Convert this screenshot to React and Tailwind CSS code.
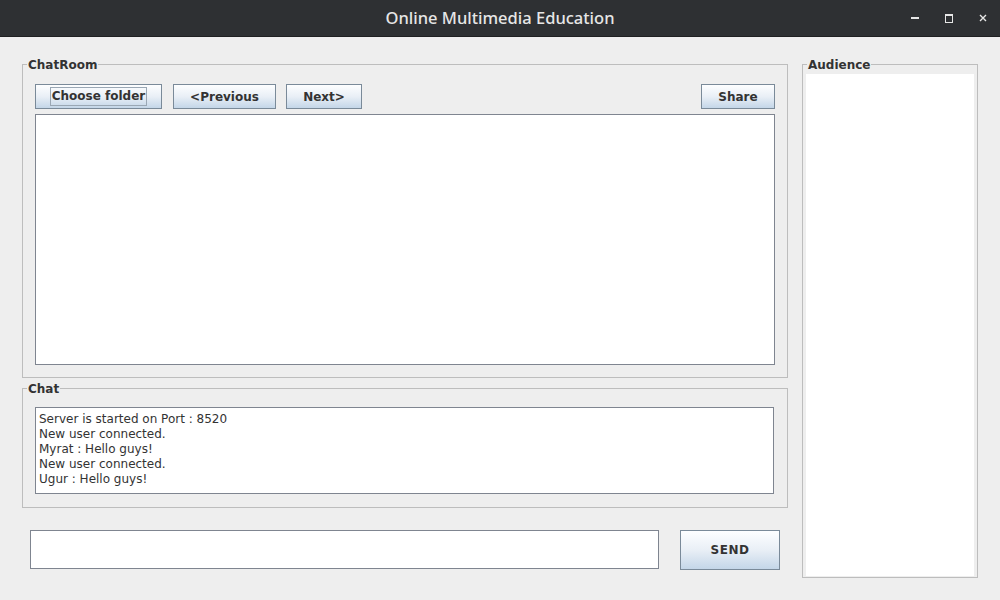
import React from "react";

const font = { fontFamily: '"DejaVu Sans", sans-serif' };

function SwingButton({ children, className = "", focused = false }) {
  return (
    <button
      className={
        "flex items-center justify-center border border-[#7a8a99] bg-gradient-to-b from-[#fdfeff] via-[#e9eff6] to-[#c4d6e8] text-[12px] font-bold text-[#333333] " +
        className
      }
    >
      {focused ? (
        <span className="border border-[#9aa7b4] px-[1px] leading-[17px]">{children}</span>
      ) : (
        children
      )}
    </button>
  );
}

function Group({ title, className = "", children }) {
  return (
    <div className={"relative border border-[#bdbdbd] " + className}>
      <span className="absolute -top-[7px] left-[4px] bg-[#eeeeee] px-[1px] text-[12px] font-bold leading-[15px] text-[#333333]">
        {title}
      </span>
      {children}
    </div>
  );
}

export default function App() {
  const lines = [
    "Server is started on Port : 8520",
    "New user connected.",
    "Myrat : Hello guys!",
    "New user connected.",
    "Ugur : Hello guys!",
  ];

  return (
    <div className="flex h-[600px] w-[1000px] flex-col overflow-hidden bg-[#eeeeee]" style={font}>
      {/* title bar */}
      <div className="relative flex h-[37px] shrink-0 items-center justify-center border-b border-[#1f2022] bg-[#2e3033]">
        <span
          className="text-[16.5px] font-medium text-[#e6e6e6]"
          style={{ fontFamily: '"Noto Sans", sans-serif' }}
        >
          Online Multimedia Education
        </span>
        <div className="absolute right-0 top-0 flex h-[36px] items-center">
          <div className="flex w-[34px] justify-center">
            <div className="h-[2px] w-[8px] bg-[#e6e6e6]" />
          </div>
          <div className="flex w-[34px] justify-center">
            <div className="h-[9px] w-[8px] border-[1.5px] border-t-2 border-[#e6e6e6]" />
          </div>
          <div className="flex w-[34px] justify-center">
            <svg width="8" height="8" viewBox="0 0 8 8">
              <path d="M1 1L7 7M7 1L1 7" stroke="#e6e6e6" strokeWidth="1.4" />
            </svg>
          </div>
        </div>
      </div>

      <div className="flex pt-[27px]">
        {/* left column */}
        <div className="ml-[22px] flex w-[766px] flex-col">
          <Group title="ChatRoom" className="h-[314px] px-[12px] pt-[19px]">
            <div className="flex h-[25px] gap-[10px]">
              <SwingButton className="w-[127px]" focused>
                Choose folder
              </SwingButton>
              <SwingButton className="ml-[1px] w-[103px]">&lt;Previous</SwingButton>
              <SwingButton className="w-[76px]">Next&gt;</SwingButton>
              <SwingButton className="ml-auto w-[74px]">Share</SwingButton>
            </div>
            <div className="mt-[5px] h-[251px] w-[740px] border border-[#7f8590] bg-white" />
          </Group>

          <Group title="Chat" className="mt-[10px] h-[120px] px-[12px] pt-[18px]">
            <div className="h-[87px] w-[739px] border border-[#7f8590] bg-white px-[3px] pt-[4px] text-[12px] leading-[15px] text-[#333333]">
              {lines.map((l, i) => (
                <div key={i}>{l}</div>
              ))}
            </div>
          </Group>

          <div className="mt-[22px] flex items-start">
            <div className="ml-[8px] h-[39px] w-[629px] border border-[#7f8590] bg-white" />
            <SwingButton className="ml-[21px] h-[40px] w-[100px] tracking-[0.5px]">SEND</SwingButton>
          </div>
        </div>

        {/* right column */}
        <Group title="Audience" className="ml-[14px] h-[514px] w-[176px] px-[3px] pt-[9px] pb-[1px]">
          <div className="h-full w-full bg-white" />
        </Group>
      </div>
    </div>
  );
}
